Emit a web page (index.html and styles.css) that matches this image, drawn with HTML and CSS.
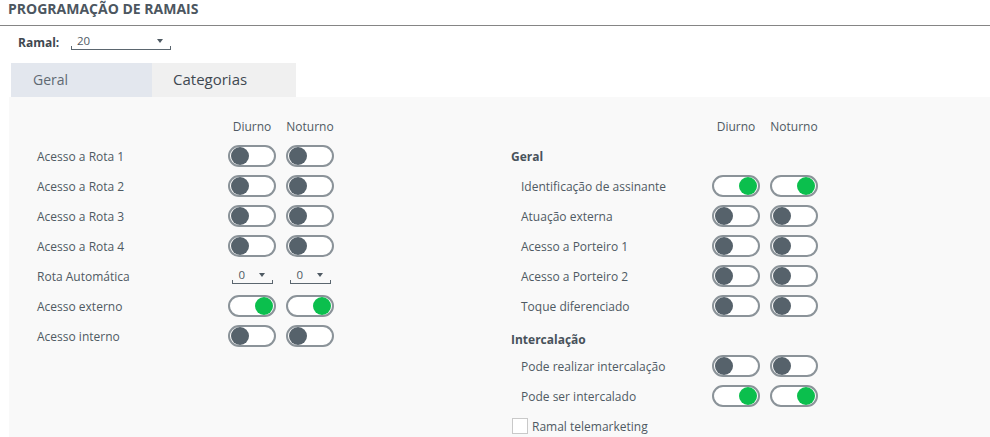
FILE: index.html
```html
<!DOCTYPE html>
<html lang="pt">
<head>
<meta charset="utf-8">
<title>Programação de Ramais</title>
<link rel="stylesheet" href="styles.css">
</head>
<body>
<div class="page-title">PROGRAMAÇÃO DE RAMAIS</div>
<div class="ramal-row">
  <span class="ramal-label">Ramal:</span>
  <div class="select select-wide"><span>20</span><span class="caret"></span></div>
</div>
<div class="tabs">
  <div class="tab tab-active">Geral</div>
  <div class="tab">Categorias</div>
</div>
<div class="panel">
  <div class="col col-left">
    <div class="row head"><span class="lbl"></span><span class="h">Diurno</span><span class="h">Noturno</span></div>
    <div class="row"><span class="lbl">Acesso a Rota 1</span><span class="tg"><i></i></span><span class="tg"><i></i></span></div>
    <div class="row"><span class="lbl">Acesso a Rota 2</span><span class="tg"><i></i></span><span class="tg"><i></i></span></div>
    <div class="row"><span class="lbl">Acesso a Rota 3</span><span class="tg"><i></i></span><span class="tg"><i></i></span></div>
    <div class="row"><span class="lbl">Acesso a Rota 4</span><span class="tg"><i></i></span><span class="tg"><i></i></span></div>
    <div class="row"><span class="lbl">Rota Automática</span>
      <span class="cell"><span class="select select-small"><span>0</span><span class="caret"></span></span></span>
      <span class="cell"><span class="select select-small"><span>0</span><span class="caret"></span></span></span>
    </div>
    <div class="row"><span class="lbl">Acesso externo</span><span class="tg on"><i></i></span><span class="tg on"><i></i></span></div>
    <div class="row"><span class="lbl">Acesso interno</span><span class="tg"><i></i></span><span class="tg"><i></i></span></div>
  </div>
  <div class="col col-right">
    <div class="row head"><span class="lbl"></span><span class="h">Diurno</span><span class="h">Noturno</span></div>
    <div class="row"><span class="sec">Geral</span></div>
    <div class="row"><span class="lbl ind">Identificação de assinante</span><span class="tg on"><i></i></span><span class="tg on"><i></i></span></div>
    <div class="row"><span class="lbl ind">Atuação externa</span><span class="tg"><i></i></span><span class="tg"><i></i></span></div>
    <div class="row"><span class="lbl ind">Acesso a Porteiro 1</span><span class="tg"><i></i></span><span class="tg"><i></i></span></div>
    <div class="row"><span class="lbl ind">Acesso a Porteiro 2</span><span class="tg"><i></i></span><span class="tg"><i></i></span></div>
    <div class="row"><span class="lbl ind">Toque diferenciado</span><span class="tg"><i></i></span><span class="tg"><i></i></span></div>
    <div class="row sec-row"><span class="sec">Intercalação</span></div>
    <div class="row"><span class="lbl ind">Pode realizar intercalação</span><span class="tg"><i></i></span><span class="tg"><i></i></span></div>
    <div class="row"><span class="lbl ind">Pode ser intercalado</span><span class="tg on"><i></i></span><span class="tg on"><i></i></span></div>
    <div class="row"><label class="check"><span class="box"></span>Ramal telemarketing</label></div>
  </div>
</div>
</body>
</html>
```
FILE: styles.css
```css
html, body {
  margin: 0;
  padding: 0;
  background: #ffffff;
}
body {
  font-family: "Open Sans", "Liberation Sans", sans-serif;
  font-size: 12px;
  color: #4f5a63;
}
.page-title {
  height: 26px;
  box-sizing: border-box;
  padding: 0 0 0 8px;
  font-weight: 700;
  font-size: 14px;
  line-height: 18px;
  color: #4c5660;
  border-bottom: 1px solid #858585;
}
.ramal-row {
  display: flex;
  align-items: center;
  height: 30px;
  padding-left: 18px;
  box-sizing: border-box;
  padding-top: 2px;
}
.ramal-label {
  font-weight: 700;
  color: #3f4850;
  width: 53px;
}
.select {
  display: flex;
  align-items: center;
  justify-content: space-between;
  box-sizing: border-box;
  height: 16px;
  position: relative;
  font-size: 11.5px;
  line-height: 14px;
  color: #4f5a63;
}
.select::after {
  content: "";
  position: absolute;
  left: 0;
  right: 0;
  bottom: 0;
  height: 3px;
  border: 1px solid #5b666f;
  border-top: none;
}
.select-wide {
  width: 100px;
  padding: 0 8px 2px 6px;
}
.select-small {
  width: 41px;
  padding: 0 8px 2px 7px;
}
.caret {
  width: 0;
  height: 0;
  border-left: 3.5px solid transparent;
  border-right: 3.5px solid transparent;
  border-top: 4px solid #4f5a63;
}
.tabs {
  display: flex;
  margin: 7px 0 0 11px;
  height: 34px;
}
.tab {
  width: 144px;
  display: flex;
  align-items: center;
  font-size: 15px;
  background: #f0f0f0;
  color: #3f4850;
  padding: 0 0 2px 21px;
  box-sizing: border-box;
}
.tab-active {
  width: 141px;
  font-size: 14px;
  background: #e3e7ee;
  color: #5f6972;
  padding-left: 22px;
}
.panel {
  margin-left: 9px;
  background: #f9f9f9;
  min-height: 340px;
  display: flex;
  padding: 14px 0 0 28px;
}
.col-left { width: 474px; }
.row {
  display: flex;
  align-items: center;
  height: 30px;
}
.col-left .lbl { width: 191px; }
.col-right .lbl { width: 201px; }
.lbl.ind { padding-left: 10px; box-sizing: border-box; }
.h {
  width: 48px;
  text-align: center;
  margin-right: 10px;
  color: #4f5a63;
}
.tg, .cell {
  width: 48px;
  height: 22px;
  margin-right: 10px;
  box-sizing: border-box;
  display: flex;
  align-items: center;
}
.cell { justify-content: center; }
.tg {
  border: 2px solid #8b9399;
  border-radius: 11px;
  background: #ffffff;
  padding: 0 1px;
}
.tg i {
  width: 18px;
  height: 18px;
  border-radius: 50%;
  background: #56626b;
}
.tg.on { justify-content: flex-end; }
.tg.on i { background: #0bbf4d; }
.sec {
  font-weight: 700;
  color: #48525b;
}
.sec-row {
  height: 24px;
  margin-top: 6px;
}
.check {
  display: flex;
  align-items: center;
  margin-left: 1px;
}
.box {
  width: 14px;
  height: 14px;
  border: 1px solid #c9c9c9;
  background: #ffffff;
  margin-right: 4px;
}
```
